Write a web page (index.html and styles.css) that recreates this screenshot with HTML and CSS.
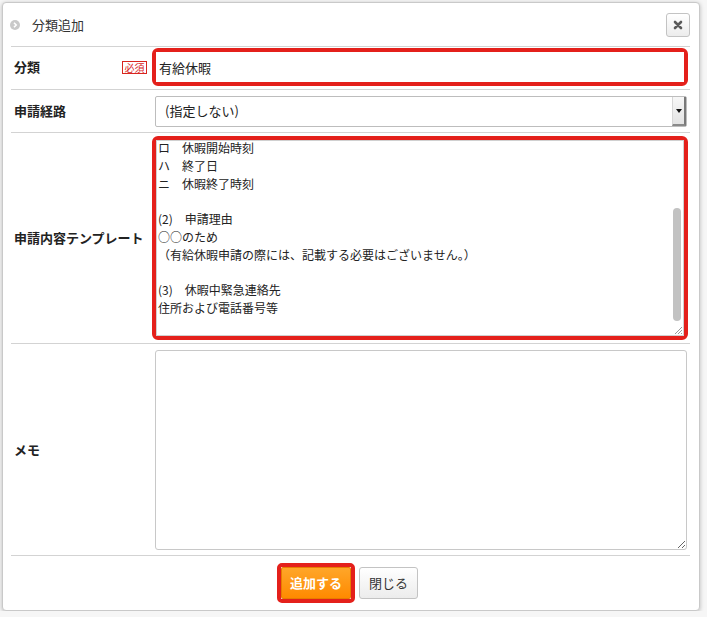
FILE: index.html
```html
<!DOCTYPE html>
<html lang="ja">

<head>
    <meta charset="UTF-8">
    <title>分類追加</title>
    <link rel="stylesheet" href="styles.css">
</head>

<body>
    <div class="dialog">
        <div class="dialog-head">
            <span class="head-icon">
                <svg width="10" height="10" viewBox="0 0 10 10"><circle cx="5" cy="5" r="5" fill="#c9c9c9"/><path d="M4 2.8 L6.2 5 L4 7.2" fill="none" stroke="#fff" stroke-width="1.6"/></svg>
            </span>
            <span class="head-title">分類追加</span>
            <button class="close-btn">
                <svg width="10" height="10" viewBox="0 0 10 10"><path d="M2 2 L8 8 M8 2 L2 8" stroke="#5a5a5a" stroke-width="2.6" stroke-linecap="round"/></svg>
            </button>
        </div>

        <div class="form">
            <div class="row row-name">
                <div class="label">分類 <span class="req">必須</span></div>
                <div class="mark mark-input">
                    <input type="text" class="text-input" value="有給休暇">
                </div>
            </div>

            <div class="row row-route">
                <div class="label">申請経路</div>
                <div class="select">
                    <span class="select-text">(指定しない)</span>
                    <span class="select-arrow"></span>
                </div>
            </div>

            <div class="row row-template">
                <div class="label">申請内容テンプレート</div>
                <div class="mark mark-area">
                    <div class="fake-area">
<div class="area-text">ロ　休暇開始時刻
ハ　終了日
ニ　休暇終了時刻

(2)　申請理由
<span class="small-mark">○○のため</span>
（有給休暇申請の際には、記載する必要はございません。）

(3)　休暇中緊急連絡先
住所および電話番号等</div>
                        <span class="thumb"></span>
                        <svg class="grip" width="10" height="10" viewBox="0 0 10 10"><path d="M9 2 L2 9 M9 5 L5 9 M9 8 L8 9" stroke="#999" stroke-width="1"/></svg>
                    </div>
                </div>
            </div>

            <div class="row row-memo">
                <div class="label">メモ</div>
                <textarea class="memo"></textarea>
            </div>
        </div>

        <div class="footer">
            <div class="mark mark-btn"><button class="btn-add">追加する</button></div>
            <button class="btn-close">閉じる</button>
        </div>
    </div>
</body>

</html>
```

FILE: styles.css
```css
body {
    margin: 0;
    background-color: #f6f6f6;
    font-family: "Noto Sans CJK JP", sans-serif;
    color: #222;
}

.dialog {
    box-sizing: border-box;
    width: 698px;
    height: 609px;
    margin: 2px 0 0 2px;
    padding: 0 9px 0 8px;
    background-color: #fff;
    border: 1px solid #c9c9c9;
    border-radius: 4px;
    box-shadow: 0 1px 4px rgba(0, 0, 0, 0.25);
}

.dialog-head {
    display: flex;
    align-items: center;
    height: 43px;
    border-bottom: 1px solid #d3d3d3;
}

.head-icon {
    display: flex;
    margin: 0 12px 0 -1px;
}

.head-title {
    font-size: 13px;
    line-height: 16px;
    color: #333;
}

.close-btn {
    display: flex;
    align-items: center;
    justify-content: center;
    width: 24px;
    height: 24px;
    margin: 0 0 0 auto;
    padding: 0;
    border: 1px solid #c3c3c3;
    border-radius: 3px;
    background: linear-gradient(#ffffff, #ececec);
}

.row {
    box-sizing: border-box;
    display: grid;
    grid-template-columns: 144px 1fr;
    align-items: center;
    padding-right: 3px;
    border-bottom: 1px solid #d3d3d3;
}

.label {
    display: flex;
    align-items: center;
    justify-content: space-between;
    padding: 0 8px 0 3px;
    font-size: 13px;
    font-weight: bold;
    line-height: 16px;
}

.req {
    box-sizing: border-box;
    width: 25px;
    height: 13px;
    border: 1px solid #d8261f;
    color: #d8261f;
    font-size: 10px;
    font-weight: normal;
    line-height: 11px;
    text-align: center;
}

.mark {
    box-sizing: border-box;
    border: 4px solid #e4201b;
    border-radius: 6px;
}

.row-name {
    height: 43px;
    padding-top: 1px;
    padding-bottom: 3px;
}

.mark-input {
    height: 38px;
    margin: 0 -1px 0 -3px;
    display: flex;
}

.text-input {
    flex: 1;
    border: none;
    outline: none;
    padding: 0 3px;
    font-family: inherit;
    font-size: 13px;
    color: #222;
}

.row-route {
    height: 43px;
}

.select {
    box-sizing: border-box;
    display: flex;
    align-items: center;
    height: 31px;
    border: 1px solid #bdbdbd;
    border-radius: 2px;
}

.select-text {
    flex: 1;
    padding-left: 9px;
    font-size: 13px;
    line-height: 16px;
    color: #222;
}

.select-arrow {
    position: relative;
    box-sizing: border-box;
    width: 14px;
    height: 29px;
    background: linear-gradient(#f7f7f7, #e3e3e3);
    border-left: 1px solid #d6d6d6;
    border-right: 2px solid #7a7a7a;
    border-bottom: 2px solid #8a8a8a;
}

.select-arrow::after {
    content: "";
    position: absolute;
    left: 3px;
    top: 12px;
    border-left: 3px solid transparent;
    border-right: 3px solid transparent;
    border-top: 4px solid #111;
}

.row-template {
    height: 211px;
}

.mark-area {
    height: 204px;
    margin: 0 -1px 0 -3px;
}

.fake-area {
    position: relative;
    box-sizing: border-box;
    height: 196px;
    border: 1px solid #d0d0d0;
    overflow: hidden;
}

.area-text {
    margin-top: -2px;
    padding: 0 0 0 1px;
    white-space: pre;
    font-size: 12px;
    line-height: 17.8px;
    color: #222;
}

.small-mark {
    font-size: 12px;
}

.thumb {
    position: absolute;
    right: 2px;
    top: 67px;
    width: 8px;
    height: 113px;
    border-radius: 4px;
    background-color: #c2c2c2;
}

.grip {
    position: absolute;
    right: 0;
    bottom: 0;
}

.row-memo {
    height: 212px;
}

.memo {
    box-sizing: border-box;
    height: 200px;
    margin: 0;
    border: 1px solid #c8c8c8;
    border-radius: 3px;
    resize: both;
    font-family: inherit;
}

.footer {
    display: flex;
    align-items: center;
    justify-content: center;
    gap: 4px;
    height: 53px;
    padding-right: 6px;
}

.mark-btn {
    padding: 0;
    border-width: 4px;
    border-radius: 5px;
}

.btn-add {
    display: block;
    height: 32px;
    padding: 0 8px;
    border: 1px solid #e77d00;
    border-radius: 2px;
    background: linear-gradient(#ffa629, #ff8a00);
    color: #fff;
    font-family: inherit;
    font-size: 13px;
    font-weight: bold;
}

.btn-close {
    height: 32px;
    padding: 0 9px;
    border: 1px solid #c3c3c3;
    border-radius: 3px;
    background: linear-gradient(#ffffff, #ececec);
    color: #333;
    font-family: inherit;
    font-size: 13px;
}
```
